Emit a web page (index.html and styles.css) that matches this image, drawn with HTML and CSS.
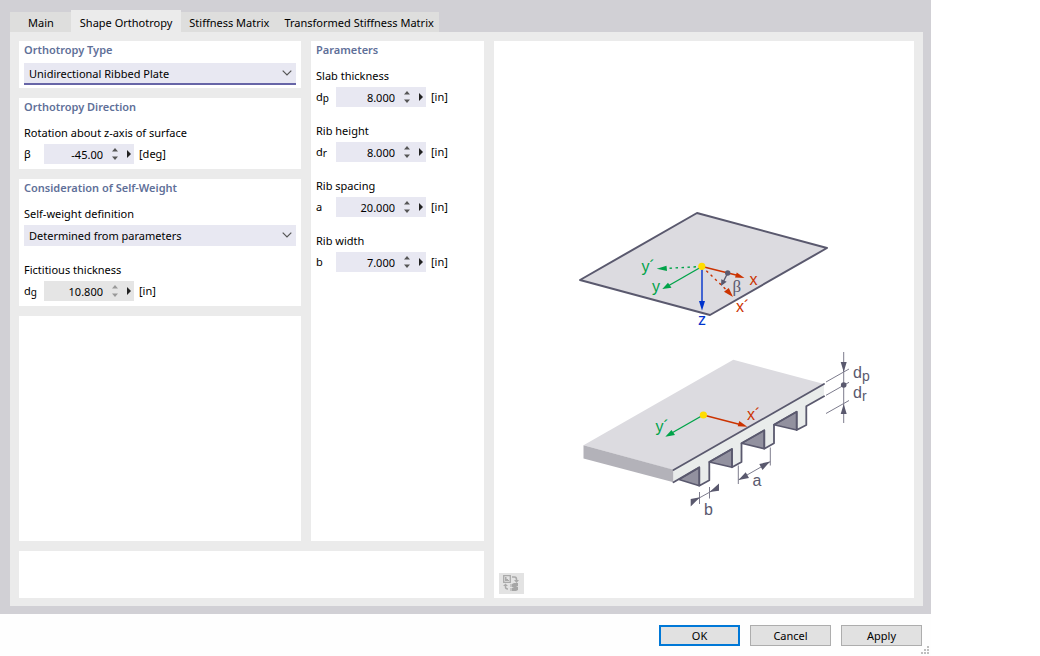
FILE: index.html
```html
<!DOCTYPE html>
<html lang="en">
<head>
<meta charset="utf-8">
<title>Shape Orthotropy</title>
<link rel="stylesheet" href="styles.css">
</head>
<body>
<main class="dialog">
  <div class="frame">
    <div class="tabs" role="tablist">
      <button class="tab tab-main" role="tab" type="button">Main</button>
      <button class="tab active" role="tab" type="button" aria-selected="true">Shape Orthotropy</button>
      <button class="tab" role="tab" type="button">Stiffness Matrix</button>
      <button class="tab tab-last" role="tab" type="button">Transformed Stiffness Matrix</button>
    </div>
    <div class="panel">
      <div class="left">
        <div class="columns">
          <div class="column">
            <section class="card compact">
              <h2 id="type-title">Orthotropy Type</h2>
              <div class="select focused">
                <select aria-labelledby="type-title"><option>Unidirectional Ribbed Plate</option></select>
                <svg class="chevron" viewBox="0 0 10 6"><path d="M0.7 0.7 5 5 9.3 0.7"/></svg>
              </div>
            </section>
            <section class="card">
              <h2>Orthotropy Direction</h2>
              <div class="group">
                <label for="beta">Rotation about z-axis of surface</label>
                <div class="row"><span class="symbol">β</span>
                  <div class="spin"><input id="beta" type="text" value="-45.00"><button class="steps" type="button" aria-label="Step"><svg viewBox="0 0 6 12"><path d="M0 3.5 3 0 6 3.5zM0 8.5 3 12 6 8.5z"/></svg></button><button class="more" type="button" aria-label="More"><svg viewBox="0 0 4 8"><path d="M0 0 4 4 0 8z"/></svg></button></div>
                  <span>[deg]</span></div>
              </div>
            </section>
            <section class="card">
              <h2>Consideration of Self-Weight</h2>
              <div class="group">
                <label for="definition">Self-weight definition</label>
                <div class="select">
                  <select id="definition"><option>Determined from parameters</option></select>
                  <svg class="chevron" viewBox="0 0 10 6"><path d="M0.7 0.7 5 5 9.3 0.7"/></svg>
                </div>
              </div>
              <div class="group">
                <label for="fictitious">Fictitious thickness</label>
                <div class="row"><span class="symbol">d<sub>g</sub></span>
                  <div class="spin readonly"><input id="fictitious" type="text" value="10.800" readonly><button class="steps" type="button" aria-label="Step" disabled><svg viewBox="0 0 6 12"><path d="M0 3.5 3 0 6 3.5zM0 8.5 3 12 6 8.5z"/></svg></button><button class="more" type="button" aria-label="More"><svg viewBox="0 0 4 8"><path d="M0 0 4 4 0 8z"/></svg></button></div>
                  <span>[in]</span></div>
              </div>
            </section>
            <section class="card fill"></section>
          </div>
          <section class="card">
            <h2>Parameters</h2>
            <div class="group">
              <label for="slab">Slab thickness</label>
              <div class="row"><span class="symbol">d<sub>p</sub></span>
                <div class="spin"><input id="slab" type="text" value="8.000"><button class="steps" type="button" aria-label="Step"><svg viewBox="0 0 6 12"><path d="M0 3.5 3 0 6 3.5zM0 8.5 3 12 6 8.5z"/></svg></button><button class="more" type="button" aria-label="More"><svg viewBox="0 0 4 8"><path d="M0 0 4 4 0 8z"/></svg></button></div>
                <span>[in]</span></div>
            </div>
            <div class="group">
              <label for="height">Rib height</label>
              <div class="row"><span class="symbol">d<sub>r</sub></span>
                <div class="spin"><input id="height" type="text" value="8.000"><button class="steps" type="button" aria-label="Step"><svg viewBox="0 0 6 12"><path d="M0 3.5 3 0 6 3.5zM0 8.5 3 12 6 8.5z"/></svg></button><button class="more" type="button" aria-label="More"><svg viewBox="0 0 4 8"><path d="M0 0 4 4 0 8z"/></svg></button></div>
                <span>[in]</span></div>
            </div>
            <div class="group">
              <label for="spacing">Rib spacing</label>
              <div class="row"><span class="symbol">a</span>
                <div class="spin"><input id="spacing" type="text" value="20.000"><button class="steps" type="button" aria-label="Step"><svg viewBox="0 0 6 12"><path d="M0 3.5 3 0 6 3.5zM0 8.5 3 12 6 8.5z"/></svg></button><button class="more" type="button" aria-label="More"><svg viewBox="0 0 4 8"><path d="M0 0 4 4 0 8z"/></svg></button></div>
                <span>[in]</span></div>
            </div>
            <div class="group">
              <label for="width">Rib width</label>
              <div class="row"><span class="symbol">b</span>
                <div class="spin"><input id="width" type="text" value="7.000"><button class="steps" type="button" aria-label="Step"><svg viewBox="0 0 6 12"><path d="M0 3.5 3 0 6 3.5zM0 8.5 3 12 6 8.5z"/></svg></button><button class="more" type="button" aria-label="More"><svg viewBox="0 0 4 8"><path d="M0 0 4 4 0 8z"/></svg></button></div>
                <span>[in]</span></div>
            </div>
          </section>
        </div>
        <section class="card notes"></section>
      </div>
      <section class="card preview">
        <svg class="diagram" viewBox="494 41 420 532" role="img" aria-label="Ribbed plate geometry">
          <path class="plate" d="M580 280 697 213 827 248 710 315z"/>
          <g class="red"><path d="M702 266.5 738 275.5"/><path stroke-dasharray="2.5 3.5" d="M702 266.5 727 290.5"/><path class="head" d="M744.5 278 735 277.6 736.8 272.4zM733 297 724 291.8 728.8 288z"/></g>
          <g class="green"><path d="M702 266.5 668 286"/><path stroke-dasharray="2.5 3.5" d="M702 266.5 666 268.4"/><path class="head" d="M662.3 289 668 282.7 671.5 287.8zM656.7 268.7 666.5 265.8 667 271z"/></g>
          <g class="blue"><path d="M702 266.5V303"/><path class="head" d="M702 310.5 699 301H705z"/></g>
          <g class="dark"><path d="M727.7 273 723.7 281"/><path class="head" d="M721 286 721.3 279.3 726.7 281.8z"/><circle class="head" cx="727.7" cy="273" r="2.7"/></g>
          <circle class="origin" cx="701.8" cy="266.3" r="3.6"/>
          <text class="t-green" x="641.5" y="272">y´</text>
          <text class="t-green" x="652" y="292">y</text>
          <text class="t-red" x="749.5" y="285">x</text>
          <text class="t-red" x="736" y="312">x´</text>
          <text class="t-blue" x="698" y="325">z</text>
          <text class="t-dark beta" x="732.5" y="292">β</text>

          <path class="top" d="M583.5 445.3 733.3 359.7 824 384 673.5 470z"/>
          <path class="side" d="M583.5 445.3 673.5 469.7V482.3L583.5 458.5z"/>
          <path class="front" d="M673.5 470 824 384V396.3L806.3 406.3V425L796.7 430V411.7L774 424.7V443.3L764.3 448.7V430.3L741.5 443.3V462L732 467.3V449L709.3 462V480.3L699.3 485.7V467.3L673.5 482.3z"/>
          <path class="rib" d="M679 479.5 699.3 467.5V485.7zM709.3 462 732 449V467.3zM741.5 443.3 764.3 430.3V448.7zM774 424.7 796.7 411.7V430z"/>
          <path class="outline" d="M673.5 470 824 384M673.5 482.3 699.3 467.3V485.7L709.3 480.3V462L732 449V467.3L741.5 462V443.3L764.3 430.3V448.7L774 443.3V424.7L796.7 411.7V430L806.3 425V406.3L824 396.3"/>
          <g class="red"><path d="M703.3 415 740 424.5"/><path class="head" d="M747.3 426.7 737.7 426.3 739.3 421z"/></g>
          <g class="green"><path d="M703.3 415 670 434"/><path class="head" d="M665.3 436.8 671.5 430 675 435z"/></g>
          <circle class="origin" cx="703.4" cy="415" r="3.6"/>
          <text class="t-green" x="655.5" y="432">y´</text>
          <text class="t-red" x="747" y="420">x´</text>
          <path class="thin" d="M738.3 465.5V484M770.3 447.5V465.5M738.3 480 770.3 461.7M699.5 492V504M709.5 487V498.5M691 502.5 719 487M843.7 352V423M826 382 849 369M826 395.3 849 382.3M826 413.5 849 400.5"/>
          <path class="fill-dark" d="M738.5 480 745.7 472.3 749 478zM770 461.5 759.3 464 762.5 470zM700 497.3 690.7 499 690.7 506.5zM709.5 492 719 483.5V490.8zM843.7 372 840.7 362H846.7zM843.7 404 840.7 414H846.7z"/>
          <circle class="fill-dark" cx="843.7" cy="385" r="2.8"/>
          <text class="t-dark" x="752.5" y="486">a</text>
          <text class="t-dark" x="704" y="515">b</text>
          <text class="t-dark" x="853" y="378">d<tspan class="small" dy="3">p</tspan></text>
          <text class="t-dark" x="853" y="398">d<tspan class="small" dy="3">r</tspan></text>
        </svg>
        <button class="tool" type="button" aria-label="Switch picture">
          <svg viewBox="0 0 17 17"><g fill="none" stroke="#aaa"><path stroke-width="1.3" d="M.7.7H7.3V7.3H.7z"/><path stroke-width="1.5" d="M9 2H11.5Q13.5 2 13.5 4.5V6M2.5 10V12Q2.5 14 5 14"/></g><path fill="#aaa" d="M2 2H3.5V4H5V5H6V6H2zM11 5H16L13.5 8zM0 11 2.5 8.5 5 11z"/><path fill="#c4c4c4" d="M7 9H9V12H7zM7 13H9V16H7z"/><path fill="#a6a6a6" d="M9 9 11 8H15V11L13 12H9zM9 13 11 12H15V15L13 16H9z"/></svg>
        </button>
      </section>
    </div>
  </div>
  <footer class="actions">
    <button class="action primary" type="button">OK</button>
    <button class="action" type="button">Cancel</button>
    <button class="action" type="button">Apply</button>
  </footer>
  <svg class="grip" viewBox="0 0 8 8"><path d="M6 0H8V2H6zM3 3H5V5H3zM6 3H8V5H6zM0 6H2V8H0zM3 6H5V8H3zM6 6H8V8H6z"/></svg>
</main>
</body>
</html>
```
FILE: styles.css
```css
* { box-sizing: border-box; }
body {
  margin: 0;
  padding-right: 109px;
  background: #fff;
  color: #000;
  font: 11px/16px "Noto Sans", "Open Sans", sans-serif;
}
button, input, select { font: inherit; color: inherit; border: 0; border-radius: 0; margin: 0; padding: 0; }
svg { display: block; }
.dialog { position: relative; display: flex; flex-direction: column; min-height: 100vh; background: #fefefe; }
.frame { flex: 1; display: flex; flex-direction: column; padding: 10px 8px 8px 10px; background: #d1d0d5; }
.tabs { display: flex; align-items: flex-end; height: 22px; }
.tab { height: 20px; padding: 2px 7px 0 8px; background: #dededd; }
.tab-main { padding: 2px 17px 0 18px; }
.tab-last { padding-right: 5px; }
.tab.active { height: 22px; padding: 4px 9px 0; background: #ebebeb; }
.panel { flex: 1; display: flex; gap: 10px; padding: 9px 9px 8px; background: #ebebeb; }
.left { flex: 465; display: flex; flex-direction: column; gap: 10px; }
.columns { flex: 1; display: grid; grid-template-columns: 282fr 173fr; gap: 10px; }
.column { display: flex; flex-direction: column; gap: 10px; }
.card { padding: 0 5px 5px; background: #fff; }
.compact { padding-bottom: 3px; }
.fill { flex: 1; }
.notes { height: 47px; }
.preview { flex: 420; display: flex; flex-direction: column; padding: 0 0 4px; }
h2 { margin: 0; height: 19px; font-size: 11px; line-height: 18px; font-weight: 600; color: #5f7099; }
.group { margin-top: 8px; }
.group + .group { margin-top: 16px; }
label { display: block; height: 16px; }
.select { position: relative; margin-top: 3px; height: 21px; background: #e8e8f2; }
.select select { appearance: none; width: 100%; height: 100%; padding: 0 20px 0 5px; background: none; outline: 0; }
.focused { height: 22px; border-bottom: 2px solid #6765a7; }
.focused select { padding-top: 2px; }
.chevron { position: absolute; right: 4px; top: 7px; width: 10px; height: 6px; fill: none; stroke: #555; stroke-width: 1.2; pointer-events: none; }
.row { display: flex; align-items: center; height: 20px; margin-top: 3px; }
.symbol { width: 20px; }
sub { font-size: 10px; line-height: 0; vertical-align: -1px; }
.spin { display: flex; align-items: center; width: 90px; height: 20px; margin-right: 5px; background: #e8e8f2; }
.spin input { width: 59px; height: 20px; text-align: right; background: none; outline: 0; }
.spin button { background: none; }
.steps { width: 6px; margin-left: 9px; }
.more { width: 4px; margin-left: 9px; }
.steps svg { width: 6px; height: 12px; fill: #555; }
.more svg { width: 4px; height: 8px; fill: #222; }
.readonly { background: #e5e5e5; }
.readonly .steps svg { fill: #999; }
.diagram { flex: 1; width: 100%; min-height: 0; }
.tool { display: grid; place-items: center; width: 25px; height: 21px; margin-left: 5px; background: #e3e3e3; }
.tool svg { width: 17px; height: 17px; }
.actions { display: flex; justify-content: flex-end; gap: 10px; padding: 11px 9px 10px; }
.action { width: 81px; height: 21px; background: #e1e1e1; border: 1px solid #adadad; line-height: 18px; }
.primary { border: 2px solid #0078d7; }
.grip { position: absolute; right: 2px; bottom: 2px; width: 8px; height: 8px; fill: #bfbfbf; }
.plate { fill: #dcdbe0; stroke: #5a596e; stroke-width: 2; stroke-linejoin: round; }
.top { fill: #dcdbe0; }
.side { fill: #b3b2b9; }
.front { fill: #e9eceb; }
.rib { fill: #92919f; stroke: #5a596e; stroke-width: 1.5; stroke-linejoin: round; }
.outline { fill: none; stroke: #5a596e; stroke-width: 1.8; stroke-linejoin: round; stroke-linecap: round; }
.thin { fill: none; stroke: #7d7c8d; stroke-width: 1; }
.red, .green, .blue, .dark { fill: none; stroke-width: 1.4; }
.red { stroke: #cc3300; }
.green { stroke: #00a349; }
.blue { stroke: #0033cc; }
.dark { stroke: #5a596e; }
.head { stroke: none; }
.red .head, .t-red { fill: #cc3300; }
.green .head, .t-green { fill: #00a349; }
.blue .head, .t-blue { fill: #0033cc; }
.dark .head, .t-dark, .fill-dark { fill: #5a596e; }
.origin { fill: #ffdd00; }
.diagram text { font: 16px "Liberation Sans", sans-serif; }
.diagram .beta { font: 17px "Liberation Serif", serif; }
.diagram .small { font-size: 14px; }
```
